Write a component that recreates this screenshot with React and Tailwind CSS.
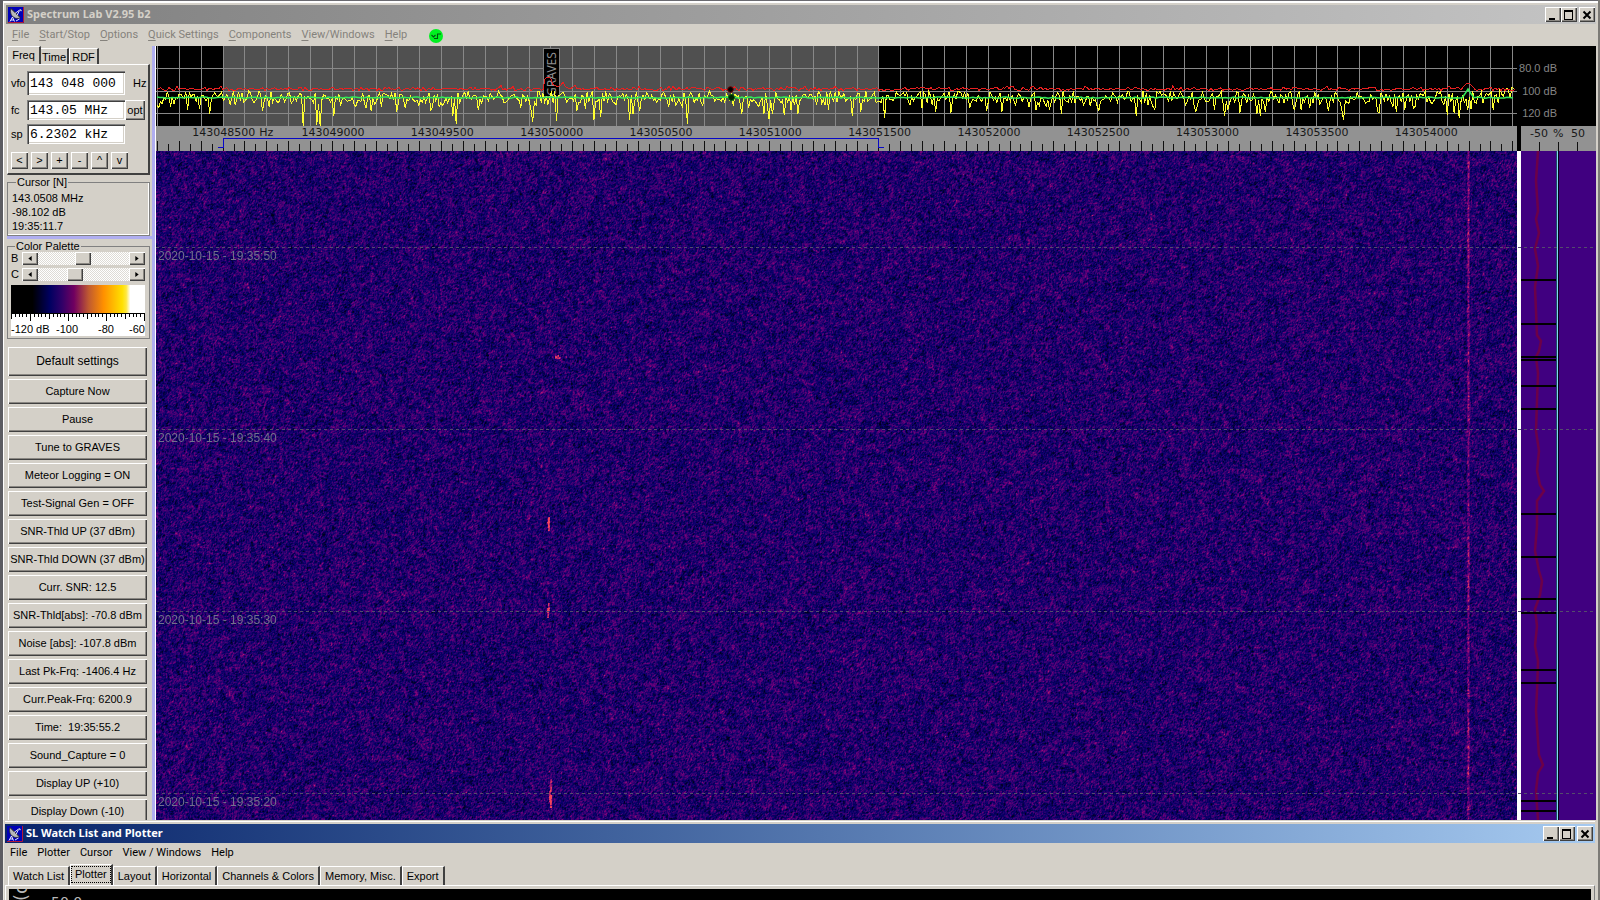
import { useEffect, useRef } from "react";

const RAISED =
  "bg-[#d4d0c8] shadow-[inset_1px_1px_0_#ffffff,inset_-1px_-1px_0_#404040,inset_-2px_-2px_0_#8a8782]";
const SUNKEN =
  "bg-white shadow-[inset_1px_1px_0_#808080,inset_2px_2px_0_#404040,inset_-1px_-1px_0_#ffffff,inset_-2px_-2px_0_#d4d0c8]";

function makeRandom(seed) {
  let a = seed;
  return () => {
    a = (a + 0x6d2b79f5) | 0;
    let t = Math.imul(a ^ (a >>> 15), 1 | a);
    t = (t + Math.imul(t ^ (t >>> 7), 61 | t)) ^ t;
    return ((t ^ (t >>> 14)) >>> 0) / 4294967296;
  };
}

const PLOT_W = 1361;
const GRID_X = Array.from({ length: 63 }, (_, k) => 1.5 + 21.86 * k);
const TICK_X = Array.from({ length: 125 }, (_, k) => 1.5 + 10.93 * k);

const DIPS = [
  [147, 80], [160, 79], [165, 80], [178, 70], [43, 63], [53, 68], [210, 62], [275, 64], [301, 78], [296, 70],
  [376, 76], [400, 75], [421, 65], [438, 74], [445, 71], [473, 74], [477, 68], [532, 78], [585, 68],
  [613, 73], [642, 68], [696, 70], [728, 72], [780, 66], [846, 66], [905, 68], [980, 70], [1040, 66],
  [1104, 70], [1110, 66], [1172, 65], [1188, 74], [1222, 66], [1248, 64], [1291, 69], [1303, 72], [1337, 64],
];

function yellowTrace() {
  const rnd = makeRandom(77);
  const pts = [];
  for (let x = 1; x < 1360; x += 1.7) {
    let y = 45 + rnd() * 12;
    if (rnd() < 0.22) y += rnd() * 13;
    if (x > 1328) y -= 4;
    const dip = DIPS.find((d) => Math.abs(d[0] - x) <= 0.85);
    if (dip) y = dip[1];
    pts.push(`${x.toFixed(1)},${y.toFixed(1)}`);
  }
  return pts.join(" ");
}

function redTrace() {
  const rnd = makeRandom(5);
  const pts = [];
  for (let x = 1; x < 1360; x += 2) {
    let y = 41.5 + rnd() * 3.2;
    if (rnd() < 0.08) y -= 2;
    const g = Math.abs(x - 392);
    if (g < 5) y = 30 + g;
    else if (x > 396 && x < 410) y -= 4;
    const h = Math.abs(x - 1312);
    if (h < 6) y = 36 + h;
    pts.push(`${x},${y.toFixed(1)}`);
  }
  return pts.join(" ");
}

function greenTrace() {
  const rnd = makeRandom(19);
  const pts = [];
  for (let x = 1; x < 1360; x += 3) {
    let y = 51 + rnd() * 1.2;
    const h = Math.abs(x - 1312);
    if (h < 5) y = 43 + h * 1.6;
    pts.push(`${x},${y.toFixed(1)}`);
  }
  return pts.join(" ");
}

const YELLOW = yellowTrace();
const RED = redTrace();
const GREEN = greenTrace();

function DishIcon() {
  return (
    <svg viewBox="0 0 16 16" className="size-4 shrink-0" aria-hidden="true">
      <rect width="16" height="16" fill="#0000b8" />
      <path d="M15.5 0v15.5H0" fill="none" stroke="#b01838" />
      <path d="M3 1.500c-1.500 4 .5 8.500 4.500 9.700 2 .6 3.800.2 4.800-.7z" fill="#b8b8b8" stroke="#202020" strokeWidth=".7" />
      <path d="M3.500 2l8.500 8.500" stroke="#303030" strokeWidth=".8" />
      <path d="M7 6.500l4.500-3.500M9 8.500l2.500-5" stroke="#f4f4f4" strokeWidth=".9" />
      <path d="M12 2.500l1.500 1.500" stroke="#d0d0d0" strokeWidth="1.200" />
      <path d="M2 14.500l2.500-4.500 2 4.500M3 13h3M8 14l3.500-2" stroke="#ffffff" fill="none" strokeWidth=".9" />
    </svg>
  );
}

function WindowButtons() {
  const base = `${RAISED} flex h-[15px] w-4 items-center justify-center`;
  return (
    <div className="ml-auto flex items-center">
      <button type="button" aria-label="Minimize" className={base}>
        <svg viewBox="0 0 12 12" className="size-3" shapeRendering="crispEdges"><path d="M2 9h6v2H2z" fill="#000" /></svg>
      </button>
      <button type="button" aria-label="Maximize" className={base}>
        <svg viewBox="0 0 12 12" className="size-3" shapeRendering="crispEdges">
          <path d="M1 1h9v10H1zM2 3v7h7V3z" fill="#000" fillRule="evenodd" />
        </svg>
      </button>
      <button type="button" aria-label="Close" className={`${base} ml-0.5`}>
        <svg viewBox="0 0 12 12" className="size-3"><path d="M2.500 2.500l7 7M9.500 2.500l-7 7" stroke="#000" strokeWidth="2" /></svg>
      </button>
    </div>
  );
}

function FreqField({ id, label, value, tall }) {
  return (
    <>
      <label htmlFor={id} className="w-4 text-[11px]">{label}</label>
      <input
        id={id}
        defaultValue={value}
        className={`${SUNKEN} ${tall ? "h-6" : "h-5"} w-[98px] px-[3px] font-['Liberation_Mono',monospace] text-[13px] text-black outline-none`}
      />
    </>
  );
}

function Slider({ label, value }) {
  const arrow = `${RAISED} flex h-[13px] w-4 shrink-0 items-center justify-center`;
  return (
    <div className="flex h-[13px] items-center">
      <label htmlFor={`palette-${label}`} className="w-[11px] shrink-0 text-[11px] leading-[13px] font-medium">{label}</label>
      <button type="button" aria-label={`${label} lower`} className={arrow}>
        <svg viewBox="0 0 4 6" className="h-[5px] w-1"><path d="M4 0v6L0 3z" /></svg>
      </button>
      <input
        id={`palette-${label}`}
        type="range"
        defaultValue={value}
        className="h-[13px] w-0 min-w-0 flex-1 appearance-none bg-[repeating-conic-gradient(#ffffff_0_25%,#dedbd5_0_50%)] bg-size-[2px_2px] [&::-webkit-slider-thumb]:h-[13px] [&::-webkit-slider-thumb]:w-4 [&::-webkit-slider-thumb]:appearance-none [&::-webkit-slider-thumb]:bg-[#d4d0c8] [&::-webkit-slider-thumb]:shadow-[inset_1px_1px_0_#ffffff,inset_-1px_-1px_0_#404040,inset_-2px_-2px_0_#8a8782]"
      />
      <button type="button" aria-label={`${label} higher`} className={arrow}>
        <svg viewBox="0 0 4 6" className="h-[5px] w-1"><path d="M0 0v6l4-3z" /></svg>
      </button>
    </div>
  );
}

const ACTIONS = [
  "Capture Now", "Pause", "Tune to GRAVES", "Meteor Logging = ON", "Test-Signal Gen = OFF",
  "SNR-Thld UP (37 dBm)", "SNR-Thld DOWN (37 dBm)", "Curr. SNR: 12.5", "SNR-Thld[abs]: -70.8 dBm",
  "Noise [abs]: -107.8 dBm", "Last Pk-Frq: -1406.4 Hz", "Curr.Peak-Frq: 6200.9", "Time:\u00a0 19:35:55.2",
  "Sound_Capture = 0", "Display UP (+10)", "Display Down (-10)",
];

function Sidebar() {
  return (
    <aside className="flex w-[146px] shrink-0 flex-col overflow-hidden pl-px text-[11px]">
      <div role="tablist" className="flex h-[18px] shrink-0 items-end">
        <button type="button" role="tab" aria-selected="true" className="h-[18px] w-[34px] border-t border-r-2 border-l border-t-white border-r-[#404040] border-l-white">Freq</button>
        <button type="button" role="tab" aria-selected="false" className="h-4 w-7 border-t border-r-2 border-t-white border-r-[#404040]">Time</button>
        <button type="button" role="tab" aria-selected="false" className="h-4 w-[30px] border-t border-r-2 border-l border-t-white border-r-[#404040] border-l-white">RDF</button>
      </div>
      <div className="mr-0.5 flex h-[111px] shrink-0 flex-col border-t border-r-2 border-b-2 border-l border-t-white border-r-[#404040] border-b-[#404040] border-l-white pt-1.5 pl-[3px]">
        <div className="flex h-6 items-center">
          <FreqField id="vfo" label="vfo" value="143 048 000" tall />
          <span className="pl-2">Hz</span>
        </div>
        <div className="mt-[5px] flex h-5 items-center">
          <FreqField id="fc" label="fc" value="143.05 MHz" />
          <button type="button" className={`${RAISED} h-5 w-5`}>opt</button>
        </div>
        <div className="mt-1 flex h-5 items-center">
          <FreqField id="sp" label="sp" value="6.2302 kHz" />
        </div>
        <div className="mt-2 flex gap-[3px]">
          {["<", ">", "+", "-", "^", "v"].map((s) => (
            <button key={s} type="button" className={`${RAISED} h-[17px] w-[17px] leading-[15px]`}>{s}</button>
          ))}
        </div>
      </div>

      <fieldset className="mr-0.5 h-[61px] min-w-0 shrink-0 border border-[#808080] pt-0.5 pl-1 shadow-[inset_-1px_-1px_0_#ffffff]">
        <legend className="ml-1 h-[14px] px-px leading-[14px]">Cursor [N]</legend>
        <p className="leading-[14px]">143.0508 MHz</p>
        <p className="leading-[14px]">-98.102 dB</p>
        <p className="leading-[14px]">19:35:11.7</p>
      </fieldset>
      <div className="h-[3px] shrink-0 bg-[#b0aef0]" />
      <fieldset className="mr-0.5 h-[100px] min-w-0 shrink-0 border border-[#808080] pr-1 pl-[3px]">
        <legend className="ml-1 h-[14px] px-px leading-[14px]">Color Palette</legend>
        <div className="-mt-px flex flex-col gap-[3px]">
          <Slider label="B" value={49} />
          <Slider label="C" value={38} />
        </div>
        <div className="mt-1 h-7 bg-[linear-gradient(90deg,#000_0%,#000_16%,#000060_29%,#300068_38%,#700060_47%,#c05a30_58%,#ff9000_69%,#ffe000_83%,#ffe840_86%,#fff_89%)]" />
        <div className="bg-white">
          <svg viewBox="0 0 134 9" preserveAspectRatio="none" className="block h-[9px] w-full" shapeRendering="crispEdges">
            <path d="M0 .5h134" stroke="#000" />
            {Array.from({ length: 36 }, (_, i) => (
              <path key={i} d={`M${0.5 + i * 3.8} 0V${i % 10 === 5 || i === 35 ? 8 : i % 5 === 0 ? 6 : 4}`} stroke="#000" />
            ))}
          </svg>
          <div className="flex h-[14px] leading-[14px]">
            <span className="w-[45px]">-120 dB</span>
            <span className="flex-1">-100</span>
            <span className="w-[31px]">-80</span>
            <span>-60</span>
          </div>
        </div>
      </fieldset>

      <div className="flex flex-col gap-[3px] pt-2 pr-[5px] pl-px">
        <button type="button" className={`${RAISED} h-[29px] shrink-0 pb-px text-xs`}>Default settings</button>
        {ACTIONS.map((a) => (
          <button key={a} type="button" className={`${RAISED} h-[25px] shrink-0 whitespace-nowrap`}>{a}</button>
        ))}
      </div>
    </aside>
  );
}

const FREQS = [
  "143048500", "143049000", "143049500", "143050000", "143050500", "143051000",
  "143051500", "143052000", "143052500", "143053000", "143053500", "143054000",
];

function Spectrum() {
  return (
    <div className="flex h-20 shrink-0 bg-black">
      <div className="relative grid min-w-0 flex-1">
        <svg viewBox={`0 0 ${PLOT_W} 80`} preserveAspectRatio="none" className="col-start-1 row-start-1 block h-20 w-full" shapeRendering="crispEdges">
          <rect x="67" width="655" height="80" fill="#505050" />
          {GRID_X.map((x) => <path key={x} d={`M${x} 0V80`} stroke="#888888" />)}
          {[22.5, 45.5, 67.5].map((y) => <path key={y} d={`M0 ${y}H${PLOT_W}`} stroke="#888888" />)}
        </svg>
        <span className="absolute top-0.5 left-[28.4%] flex h-[49px] w-[17px] rotate-180 items-center border border-[#808080] bg-black font-['Noto_Sans',sans-serif] text-xs leading-[15px] text-[#909090] [writing-mode:vertical-rl]">GRAVES</span>
        <svg viewBox={`0 0 ${PLOT_W} 80`} preserveAspectRatio="none" className="relative col-start-1 row-start-1 block h-20 w-full" fill="none">
          <polyline points={YELLOW} stroke="#ffff30" shapeRendering="crispEdges" />
          <polyline points={RED} stroke="#e82020" shapeRendering="crispEdges" />
          <polyline points={GREEN} stroke="#30e858" strokeWidth="1.500" />
          <circle cx="574.500" cy="43.500" r="2.800" fill="#000" stroke="#700000" />
          <circle cx="575.500" cy="51.500" r="3" fill="#002000" stroke="#006010" />
        </svg>
      </div>
      <div className="flex w-[79px] shrink-0 flex-col pt-[15px] pr-[39px] text-right text-[11px] text-[#858585]">
        <span className="h-[23px] leading-[15px] whitespace-nowrap">80.0 dB</span>
        <span className="h-[22px] leading-[15px]">100 dB</span>
        <span className="leading-[15px]">120 dB</span>
      </div>
    </div>
  );
}

function FrequencyScale() {
  return (
    <div className="flex h-[25px] shrink-0 bg-black font-['DejaVu_Sans',sans-serif] text-[11px] text-[#181818]">
      <div className="min-w-0 flex-1 bg-[#929292]">
        <div className="flex h-3 pr-9 pl-[13px] leading-[14px]">
          {FREQS.map((f, i) => (
            <span key={f} className="flex flex-1 justify-center">
              <span className="relative">{f}{i === 0 && <span className="absolute left-full pl-1">Hz</span>}</span>
            </span>
          ))}
        </div>
        <svg viewBox={`0 0 ${PLOT_W} 13`} preserveAspectRatio="none" className="block h-[13px] w-full" shapeRendering="crispEdges" fill="none">
          {TICK_X.map((x, i) => <path key={x} d={`M${x} ${i % 2 ? 6 : 3}V13`} stroke="#101010" />)}
          <path d="M62 9.500h5.500V.5H722.500V9.500h5" stroke="#0808c8" />
        </svg>
      </div>
      <div className="w-1" />
      <div className="w-[75px] bg-[#929292]">
        <div className="flex h-[15px] pl-[9px] leading-[15px]">
          <span className="w-[23px]">-50</span>
          <span className="w-[18px]">%</span>
          <span>50</span>
        </div>
        <svg viewBox="0 0 75 10" className="block h-2.5 w-full" shapeRendering="crispEdges">
          <path d="M18.500 1v9M37.500 1v9M56.500 1v9" stroke="#101010" />
        </svg>
      </div>
    </div>
  );
}

function smoothField(rnd, w, h, cell) {
  const gw = Math.ceil(w / cell) + 2;
  const gh = Math.ceil(h / cell) + 2;
  const grid = Float32Array.from({ length: gw * gh }, () => rnd() - 0.5);
  return (x, y) => {
    const gx = Math.floor(x / cell);
    const gy = Math.floor(y / cell);
    const fx = x / cell - gx;
    const fy = y / cell - gy;
    const i = gy * gw + gx;
    const top = grid[i] * (1 - fx) + grid[i + 1] * fx;
    const bottom = grid[i + gw] * (1 - fx) + grid[i + gw + 1] * fx;
    return top * (1 - fy) + bottom * fy;
  };
}

function drawWaterfall(canvas) {
  const w = canvas.width;
  const h = canvas.height;
  const ctx = canvas.getContext("2d");
  const img = ctx.createImageData(w, h);
  const rnd = makeRandom(2020);
  const raw = new Float32Array(w * h);
  for (let i = 0; i < raw.length; i++) raw[i] = (rnd() + rnd() + rnd()) / 3 - 0.5;
  const blobs = smoothField(rnd, w, h, 4);
  const columns = new Float32Array(w);
  [[1312, 0.38], [1311, 0.24], [1313, 0.22], [1300, 0.06], [1299, 0.04], [700, 0.03], [1168, 0.04], [1142, 0.03]].forEach(([x, v]) => {
    columns[x] = v;
  });
  const echoes = [
    [392, 366, 379, 0.7], [391, 368, 376, 0.35], [392, 452, 459, 0.65], [391, 457, 466, 0.65],
    [394, 628, 640, 0.5], [393, 640, 650, 0.6], [394, 644, 656, 0.6], [391, 440, 446, 0.2],
    [399, 205, 207, 0.5], [401, 204, 207, 0.5], [403, 206, 207, 0.5], [396, 206, 207, 0.35], [409, 205, 206, 0.35],
    [389, 176, 186, 0.15],
  ];
  for (let y = 0; y < h; y++) {
    for (let x = 0; x < w; x++) {
      const i = y * w + x;
      const up = y > 0 ? raw[i - w] : 0;
      const left = x > 0 ? raw[i - 1] : 0;
      let v = 0.43 + raw[i] * 0.55 + up * 0.45 + left * 0.37 + blobs(x, y) * 0.28;
      v += columns[x];
      for (const [ex, y0, y1, s] of echoes) {
        if ((x === ex || x === ex + 1) && y >= y0 && y <= y1) v += s;
      }
      v = Math.max(0, Math.min(1.25, v));
      let r, g = 0, b;
      if (v < 0.35) {
        r = v * 24;
        b = 28 + v * 225;
      } else if (v < 0.8) {
        r = 8 + ((v - 0.35) / 0.45) * 108;
        b = 107 + ((v - 0.35) / 0.45) * 15;
      } else {
        const k = Math.min(1, (v - 0.8) / 0.4);
        r = 116 + k * 129;
        g = k * 70;
        b = 122 - k * 32;
      }
      img.data[i * 4] = r;
      img.data[i * 4 + 1] = g;
      img.data[i * 4 + 2] = b;
      img.data[i * 4 + 3] = 255;
    }
  }
  ctx.putImageData(img, 0, 0);
}

const EVENTS = [129, 173, 206, 209, 235, 258, 363, 406, 448, 462, 519, 532, 650, 660];
const DRIFT =
  "17,0 15,30 17,60 15,68 18,82 14,98 17,115 14,136 15,160 16,184 20,190 18,200 15,206 17,222 16,250 15,280 18,300 16,320 19,334 23,340 16,350 16,375 14,400 18,420 21,430 19,444 14,458 16,475 14,495 17,510 16,540 15,560 17,590 18,604 22,614 17,622 15,640 17,669";
const STAMPS = ["2020-10-15 - 19:35:50", "2020-10-15 - 19:35:40", "2020-10-15 - 19:35:30", "2020-10-15 - 19:35:20"];

function Waterfall() {
  const ref = useRef(null);
  useEffect(() => drawWaterfall(ref.current), []);
  return (
    <div className="relative flex min-h-0 flex-1 overflow-hidden">
      <canvas ref={ref} width={1361} height={669} className="block h-[669px] min-w-0 flex-1" />
      <div className="w-1 bg-white" />
      <div className="w-[75px] bg-[#400080]">
        <svg viewBox="0 0 75 669" className="block h-[669px] w-full" fill="none">
          <polyline points={DRIFT} stroke="#6c0048" strokeWidth="2.500" />
          <g shapeRendering="crispEdges">
            {EVENTS.map((y) => <path key={y} d={`M0 ${y}H38`} stroke="#000" strokeWidth="2" />)}
            <path d="M35.500 0V669" stroke="#204868" />
            <path d="M36.500 0V669" stroke="#80d8f0" />
            <path d="M37.500 0V669" stroke="#080018" />
          </g>
        </svg>
      </div>
      <div className="absolute inset-x-0 top-24 text-xs text-[#72708c]">
        {STAMPS.map((s) => (
          <div key={s} className="h-[182px]">
            <div className="h-px bg-[repeating-linear-gradient(90deg,#544c6c_0_3px,transparent_3px_6px)]" />
            <time className="block pl-0.5 leading-4">{s}</time>
          </div>
        ))}
      </div>
    </div>
  );
}

const MAIN_MENU = ["File", "Start/Stop", "Options", "Quick Settings", "Components", "View/Windows", "Help"];

function MainWindow() {
  return (
    <section className="flex min-h-0 flex-1 flex-col border-t border-t-[#6a6a70]">
      <div className="flex min-h-0 flex-1 flex-col border-t-2 border-l border-t-white border-l-white pt-0.5 pr-0.5 pl-0.5">
        <header className="flex h-[19px] shrink-0 items-center gap-[3px] bg-linear-to-r from-[#808080] to-[#c4c4c4] pr-px pl-0.5 font-['Noto_Sans',sans-serif] text-[11px] font-bold text-[#d4d0c8]">
          <DishIcon />
          <h1>Spectrum Lab V2.95 b2</h1>
          <WindowButtons />
        </header>
        <nav className="flex h-[22px] shrink-0 items-center gap-2.5 pt-px pl-1.5 font-['Roboto',sans-serif] text-[11px] text-[#85827c]">
          {MAIN_MENU.map((m) => (
            <button key={m} type="button"><span className="underline underline-offset-2">{m[0]}</span>{m.slice(1)}</button>
          ))}
          <svg viewBox="0 0 14 14" className="ml-3 size-3.5" aria-hidden="true">
            <circle cx="7" cy="7" r="7" fill="#00f020" />
            <path d="M2.500 6l2 2 2-2M5 9.500h3.500V5H12" fill="none" stroke="#005010" strokeWidth="1.100" />
          </svg>
        </nav>
        <div className="flex min-h-0 flex-1">
          <Sidebar />
          <div className="w-1 shrink-0 border-r border-white bg-[#b0aef0]" />
          <main className="flex min-w-0 flex-1 flex-col">
            <Spectrum />
            <FrequencyScale />
            <Waterfall />
          </main>
        </div>
      </div>
    </section>
  );
}

const PLOTTER_TABS = ["Watch List", "Plotter", "Layout", "Horizontal", "Channels & Colors", "Memory, Misc.", "Export"];

function PlotterWindow() {
  return (
    <section className="flex h-20 shrink-0 flex-col overflow-hidden border-l border-l-[#e8e6e0] pr-[3px] pl-px">
      <div className="mt-px h-px shrink-0 bg-white" />
      <header className="mt-0.5 flex h-[19px] shrink-0 items-center gap-[3px] bg-linear-to-r from-[#0a246a] to-[#a6caf0] pr-0.5 pl-0.5 font-['Noto_Sans',sans-serif] text-[11px] font-bold text-white">
        <DishIcon />
        <h2>SL Watch List and Plotter</h2>
        <WindowButtons />
      </header>
      <nav className="flex h-5 shrink-0 items-center gap-2.5 pt-px pl-[5px] font-['Roboto',sans-serif] text-[11px] text-black">
        {["File", "Plotter", "Cursor", "View / Windows", "Help"].map((m) => <button key={m} type="button">{m}</button>)}
      </nav>
      <div role="tablist" className="flex h-[22px] shrink-0 items-end pl-[3px] text-[11px]">
        {PLOTTER_TABS.map((t) =>
          t === "Plotter" ? (
            <button key={t} type="button" role="tab" aria-selected="true" className="h-[21px] border-t border-r-2 border-l border-t-white border-r-[#404040] border-l-white">
              <span className="mb-0.5 block border border-dotted border-black px-[3px] leading-[15px]">{t}</span>
            </button>
          ) : (
            <button key={t} type="button" role="tab" aria-selected="false" className="h-[19px] border-t border-r-2 border-l border-t-white border-r-[#404040] border-l-white px-1">{t}</button>
          )
        )}
      </div>
      <div className="flex min-h-0 flex-1 border-t border-r border-l border-t-white border-r-[#808080] border-l-white pt-[3px] pr-[3px] pl-[3px]">
        <div className="flex flex-1 overflow-hidden bg-black font-['DejaVu_Sans',sans-serif] text-sm text-[#b8b8b8]">
          <span className="flex h-3 w-[42px] shrink-0 items-end overflow-hidden pl-0.5">
            <span className="rotate-180 text-lg leading-5 [writing-mode:vertical-rl]">(o</span>
          </span>
          <span className="pt-[5px] leading-4">50.0</span>
        </div>
      </div>
    </section>
  );
}

export default function App() {
  return (
    <div className="flex h-screen flex-col overflow-hidden border-r-2 border-l-3 border-r-[#7c7a76] border-l-[#5c5c62] bg-[#d4d0c8] font-['Liberation_Sans',Arial,sans-serif] text-black">
      <MainWindow />
      <PlotterWindow />
    </div>
  );
}
